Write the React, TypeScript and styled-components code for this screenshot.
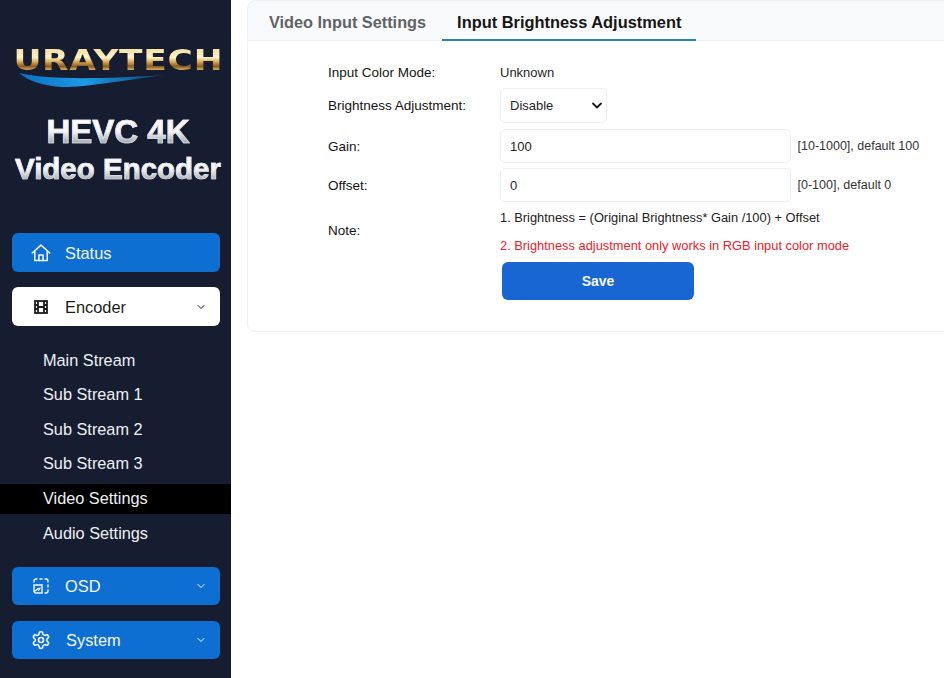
import React from "react";
import styled, { createGlobalStyle } from "styled-components";

const Global = createGlobalStyle`
  html, body { margin: 0; padding: 0; background: #fff; }
  body { font-family: "Liberation Sans", Arial, sans-serif; }
`;

const Page = styled.div`
  display: flex;
  width: 944px;
  height: 678px;
  overflow: hidden;
`;

const Sidebar = styled.aside`
  width: 231px;
  flex: none;
  background: #161d30;
  display: flex;
  flex-direction: column;
`;

const Brand = styled.div`
  height: 233px;
  box-sizing: border-box;
  padding: 49px 0 0 5px;
  display: flex;
  flex-direction: column;
  align-items: center;
`;

const LogoText = styled.div`
  font-family: "DejaVu Sans", sans-serif;
  font-weight: 700;
  font-size: 28px;
  line-height: 24px;
  letter-spacing: 0.6px;
  transform: scaleX(1.23);
  white-space: nowrap;
  color: #e3b868;
  background: linear-gradient(180deg, #f6e3ae 10%, #fff2c8 35%, #d6a350 55%, #8a5a1e 72%, #efc77a 92%);
  -webkit-background-clip: text;
  background-clip: text;
  -webkit-text-fill-color: transparent;
`;

const Swoosh = styled.svg`
  display: block;
  align-self: flex-start;
  width: 146px;
  height: 15px;
  margin-left: 14px;
`;

const TitleLine = styled.div<{ $size: number; $h: number; $mt?: number }>`
  margin-top: ${(p) => p.$mt ?? 0}px;
  font-weight: 700;
  font-size: ${(p) => p.$size}px;
  line-height: ${(p) => p.$h}px;
  text-align: center;
  white-space: nowrap;
  background: linear-gradient(180deg, #ffffff 15%, #f4f5f7 50%, #a9adb5 78%, #e8e9ec 90%);
  -webkit-background-clip: text;
  background-clip: text;
  -webkit-text-fill-color: transparent;
  -webkit-text-stroke: 0.7px #dfe1e5;
`;

const Menu = styled.nav`
  display: flex;
  flex-direction: column;
`;

const MenuButton = styled.div<{ $light?: boolean; $h?: number; $gap?: number }>`
  height: ${(p) => p.$h ?? 38}px;
  margin: 0 11px ${(p) => p.$gap ?? 16}px 12px;
  box-sizing: border-box;
  display: flex;
  align-items: center;
  border-radius: 6px;
  background: ${(p) => (p.$light ? "#ffffff" : "#0e6fd3")};
  color: ${(p) => (p.$light ? "#1c1c1c" : "#f4f8fd")};
  font-size: 16.4px;
`;

const IconSlot = styled.span`
  width: 53px;
  flex: none;
  display: flex;
  justify-content: center;
  padding-left: 4px;
  box-sizing: border-box;
`;

const MenuLabel = styled.span<{ $inset?: number }>`
  flex: 1;
  padding: 1px 0 0 ${(p) => p.$inset ?? 0}px;
`;

const ChevronSlot = styled.span`
  width: 38px;
  flex: none;
  display: flex;
  justify-content: center;
`;

const SubMenu = styled.div`
  display: flex;
  flex-direction: column;
  margin: -2px 0 18px;
`;

const SubItem = styled.div<{ $active?: boolean }>`
  height: 30px;
  margin-top: 4.6px;
  line-height: 28px;
  padding-left: 43px;
  font-size: 16.3px;
  color: #eef0f4;
  background: ${(p) => (p.$active ? "#000" : "transparent")};
`;

const Main = styled.main`
  flex: 1;
  min-width: 0;
  padding-left: 16px;
  background: #fff;
`;

const Card = styled.section`
  height: 332px;
  margin-right: -12px;
  box-sizing: border-box;
  border: 1px solid #eef0f2;
  border-radius: 8px;
  background: #fff;
  overflow: hidden;
`;

const Tabs = styled.div`
  height: 40px;
  box-sizing: border-box;
  display: flex;
  gap: 1px;
  background: #f9fafb;
  border-bottom: 1px solid #eceef1;
  padding-left: 6px;
`;

const Tab = styled.div<{ $active?: boolean }>`
  height: 40px;
  box-sizing: border-box;
  padding: 11px 15px 0;
  font-size: ${(p) => (p.$active ? 16.4 : 16.3)}px;
  line-height: 20px;
  font-weight: 700;
  white-space: nowrap;
  color: ${(p) => (p.$active ? "#161616" : "#5f6368")};
  border-bottom: ${(p) => (p.$active ? "2px solid #2a7fc9" : "none")};
`;

const Form = styled.div`
  display: grid;
  grid-template-columns: 172px 1fr;
  padding: 21px 0 0 80px;
  font-size: 13px;
  color: #1f1f1f;
`;

const Label = styled.div<{ $h: number; $mt?: number }>`
  height: ${(p) => p.$h}px;
  margin-top: ${(p) => p.$mt ?? 0}px;
  display: flex;
  align-items: center;
  font-size: 13.5px;
  color: #141414;
`;

const Value = styled.div<{ $h: number; $mt?: number }>`
  height: ${(p) => p.$h}px;
  margin-top: ${(p) => p.$mt ?? 0}px;
  display: flex;
  align-items: center;
  font-size: 13px;
`;

const SelectBox = styled.div`
  width: 107px;
  height: 35px;
  box-sizing: border-box;
  border: 1px solid #eceef0;
  border-radius: 5px;
  padding: 0 3px 0 9px;
  display: flex;
  align-items: center;
  justify-content: space-between;
`;

const TextBox = styled.div`
  width: 291px;
  height: 34px;
  flex: none;
  box-sizing: border-box;
  border: 1px solid #eceef0;
  border-radius: 5px;
  padding: 0 9px;
  display: flex;
  align-items: center;
`;

const Hint = styled.span`
  margin-left: 6.5px;
  font-size: 12.5px;
  white-space: nowrap;
  color: #333;
`;

const Notes = styled.div`
  grid-column: 2;
  display: flex;
  flex-direction: column;
  height: 57px;
  padding-top: 2px;
  box-sizing: border-box;
`;

const NoteLine = styled.div<{ $red?: boolean }>`
  height: 28px;
  line-height: 28px;
  font-size: 12.85px;
  white-space: nowrap;
  color: ${(p) => (p.$red ? "#ee2128" : "#222")};
`;

const SaveButton = styled.button`
  grid-column: 2;
  width: 192px;
  height: 38px;
  margin: 3px 0 0 2px;
  border: 0;
  border-radius: 6px;
  background: #1866d2;
  color: #f6f9fe;
  font: 700 14px "Liberation Sans", sans-serif;
`;

const House = () => (
  <svg width="20" height="20" viewBox="0 0 24 24" fill="none" stroke="currentColor" strokeWidth="1.8" strokeLinejoin="round" strokeLinecap="round">
    <path d="M1.5 12 12 2.5 22.5 12" />
    <path d="M4.5 10v11h15V10" />
    <path d="M9.5 21v-6.5h5V21" />
  </svg>
);

const Film = () => (
  <svg width="14" height="14" viewBox="0 0 14 14" fill="none" stroke="currentColor" strokeWidth="1.8">
    <rect x="1" y="1" width="12" height="12" />
    <path d="M4 1v12M10 1v12M1 5h3M1 9h3M10 5h3M10 9h3M4 7h6" />
  </svg>
);

const Osd = () => (
  <svg width="16" height="16" viewBox="0 0 16 16" fill="none" stroke="currentColor" strokeWidth="1.4" strokeLinecap="round">
    <path d="M1 4V3a2 2 0 0 1 2-2h1M7 1h2M12 1h1a2 2 0 0 1 2 2v1M15 7v2M15 12v1a2 2 0 0 1-2 2h-1" />
    <path d="M1 7h8v8H3a2 2 0 0 1-2-2z" />
    <path d="M1.5 13.5 5 10.5M5.5 12.5 7 10" />
  </svg>
);

const Gear = () => (
  <svg width="20" height="20" viewBox="0 0 24 24" fill="none" stroke="currentColor" strokeWidth="1.9" strokeLinecap="round" strokeLinejoin="round">
    <path d="M12.22 2h-.44a2 2 0 0 0-2 2v.18a2 2 0 0 1-1 1.73l-.43.25a2 2 0 0 1-2 0l-.15-.08a2 2 0 0 0-2.73.73l-.22.38a2 2 0 0 0 .73 2.73l.15.1a2 2 0 0 1 1 1.72v.51a2 2 0 0 1-1 1.74l-.15.09a2 2 0 0 0-.73 2.73l.22.38a2 2 0 0 0 2.73.73l.15-.08a2 2 0 0 1 2 0l.43.25a2 2 0 0 1 1 1.73V20a2 2 0 0 0 2 2h.44a2 2 0 0 0 2-2v-.18a2 2 0 0 1 1-1.73l.43-.25a2 2 0 0 1 2 0l.15.08a2 2 0 0 0 2.73-.73l.22-.39a2 2 0 0 0-.73-2.73l-.15-.08a2 2 0 0 1-1-1.74v-.5a2 2 0 0 1 1-1.74l.15-.09a2 2 0 0 0 .73-2.73l-.22-.38a2 2 0 0 0-2.73-.73l-.15.08a2 2 0 0 1-2 0l-.43-.25a2 2 0 0 1-1-1.73V4a2 2 0 0 0-2-2z" />
    <circle cx="12" cy="12" r="3" />
  </svg>
);

const Chevron = () => (
  <svg width="8" height="6" viewBox="0 0 8 6" fill="none" stroke="currentColor" strokeWidth="1" strokeLinecap="round" strokeLinejoin="round">
    <path d="M1 1.5 4 4.5 7 1.5" />
  </svg>
);

const SelectChevron = () => (
  <svg width="12" height="8" viewBox="0 0 12 8" fill="none" stroke="#1a1a1a" strokeWidth="1.8" strokeLinecap="round" strokeLinejoin="round">
    <path d="M2 1.5 6 5.5l4-4" />
  </svg>
);

const subItems = ["Main Stream", "Sub Stream 1", "Sub Stream 2", "Sub Stream 3", "Video Settings", "Audio Settings"];

export default function App() {
  return (
    <Page>
      <Global />
      <Sidebar>
        <Brand>
          <LogoText>URAYTECH</LogoText>
          <Swoosh viewBox="0 0 146 15">
            <defs>
              <linearGradient id="sw" x1="0" x2="1" y1="0" y2="0">
                <stop offset="0" stopColor="#0a6fc4" />
                <stop offset="0.45" stopColor="#1d9ae6" />
                <stop offset="1" stopColor="#0c3f6e" />
              </linearGradient>
            </defs>
            <path d="M0 0C28 7 85 6 146 2 100 8 68 14 44 14 25 13 9 8 0 0Z" fill="url(#sw)" />
          </Swoosh>
          <TitleLine $size={33} $h={37} $mt={25}>HEVC 4K</TitleLine>
          <TitleLine $size={29.5} $h={38}>Video Encoder</TitleLine>
        </Brand>
        <Menu>
          <MenuButton $h={39} $gap={15}>
            <IconSlot><House /></IconSlot>
            <MenuLabel>Status</MenuLabel>
          </MenuButton>
          <MenuButton $light $h={39} $gap={17}>
            <IconSlot><Film /></IconSlot>
            <MenuLabel>Encoder</MenuLabel>
            <ChevronSlot><Chevron /></ChevronSlot>
          </MenuButton>
          <SubMenu>
            {subItems.map((s) => (
              <SubItem key={s} $active={s === "Video Settings"}>{s}</SubItem>
            ))}
          </SubMenu>
          <MenuButton>
            <IconSlot><Osd /></IconSlot>
            <MenuLabel>OSD</MenuLabel>
            <ChevronSlot><Chevron /></ChevronSlot>
          </MenuButton>
          <MenuButton>
            <IconSlot><Gear /></IconSlot>
            <MenuLabel $inset={1}>System</MenuLabel>
            <ChevronSlot><Chevron /></ChevronSlot>
          </MenuButton>
        </Menu>
      </Sidebar>
      <Main>
        <Card>
          <Tabs>
            <Tab>Video Input Settings</Tab>
            <Tab $active>Input Brightness Adjustment</Tab>
          </Tabs>
          <Form>
            <Label $h={20}>Input Color Mode:</Label>
            <Value $h={21}>Unknown</Value>
            <Label $h={35} $mt={5}>Brightness Adjustment:</Label>
            <Value $h={35} $mt={5}>
              <SelectBox>Disable <SelectChevron /></SelectBox>
            </Value>
            <Label $h={34} $mt={6}>Gain:</Label>
            <Value $h={34} $mt={6}>
              <TextBox>100</TextBox>
              <Hint>[10-1000], default 100</Hint>
            </Value>
            <Label $h={34} $mt={5}>Offset:</Label>
            <Value $h={34} $mt={5}>
              <TextBox>0</TextBox>
              <Hint>[0-100], default 0</Hint>
            </Value>
            <Label $h={57}>Note:</Label>
            <Notes>
              <NoteLine>1. Brightness = (Original Brightness* Gain /100) + Offset</NoteLine>
              <NoteLine $red>2. Brightness adjustment only works in RGB input color mode</NoteLine>
            </Notes>
            <SaveButton>Save</SaveButton>
          </Form>
        </Card>
      </Main>
    </Page>
  );
}
